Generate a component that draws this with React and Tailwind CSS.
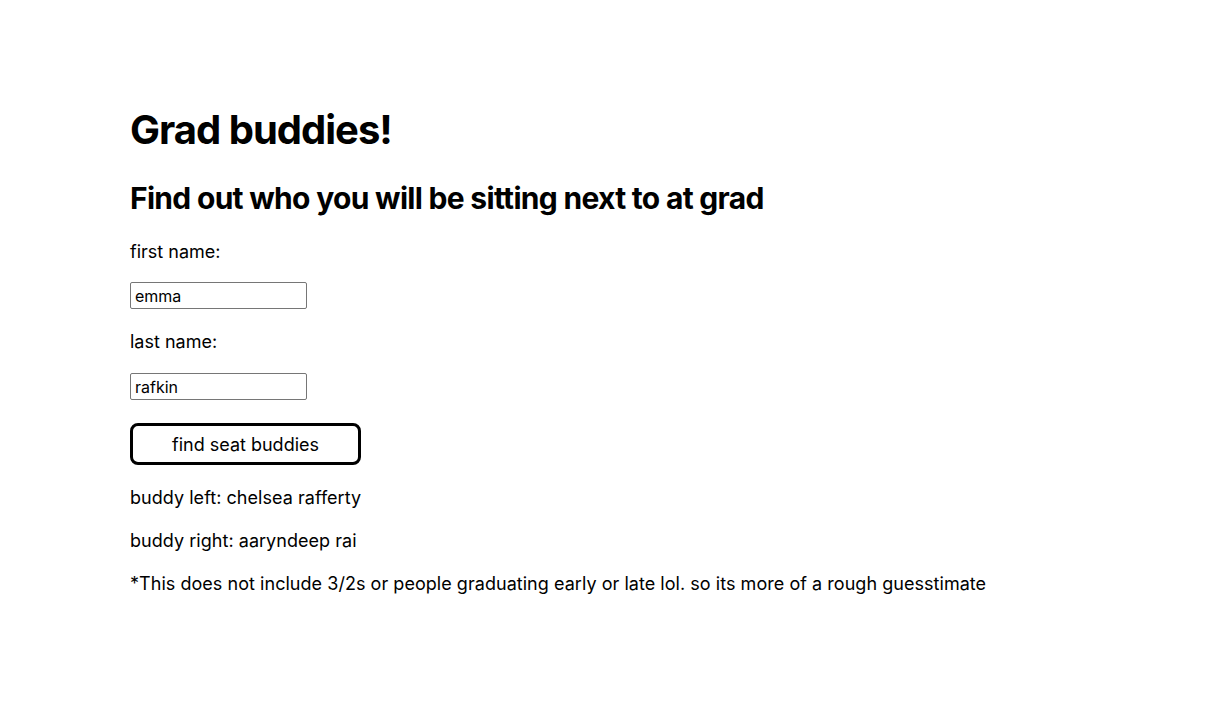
import React, { useState } from "react";

export default function App() {
  const [first, setFirst] = useState("emma");
  const [last, setLast] = useState("rafkin");

  return (
    <div className="min-h-screen bg-white text-black font-['Inter',sans-serif]">
      <div className="px-[130px] pt-[106px]">
        <h1 className="text-[40px] font-bold leading-[48px] tracking-[-1px]">Grad buddies!</h1>
        <h2 className="mt-[26px] text-[30px] font-bold leading-[36px] tracking-[-0.7px]">
          Find out who you will be sitting next to at grad
        </h2>

        <p className="mt-[22px] text-[18px] leading-[27px]">first name:</p>
        <input
          value={first}
          onChange={(e) => setFirst(e.target.value)}
          className="mt-[17px] block w-[177px] h-[27px] border border-[#767676] rounded-[2px] px-[4px] text-[16px] font-['Inter',sans-serif]"
        />

        <p className="mt-[19px] text-[18px] leading-[27px]">last name:</p>
        <input
          value={last}
          onChange={(e) => setLast(e.target.value)}
          className="mt-[18px] block w-[177px] h-[27px] border border-[#767676] rounded-[2px] px-[4px] text-[16px] font-['Inter',sans-serif]"
        />

        <button className="mt-[23px] block w-[231px] h-[42px] border-[3px] border-black rounded-[8px] text-[18px] bg-white">
          find seat buddies
        </button>

        <div className="tracking-[0.04px]">
          <p className="mt-[19px] text-[18px] leading-[27px]">buddy left: chelsea rafferty</p>
          <p className="mt-[16px] text-[18px] leading-[27px]">buddy right: aaryndeep rai</p>
          <p className="mt-[16px] text-[18px] leading-[27px]">
            *This does not include 3/2s or people graduating early or late lol. so its more of a rough guesstimate
          </p>
        </div>
      </div>
    </div>
  );
}
